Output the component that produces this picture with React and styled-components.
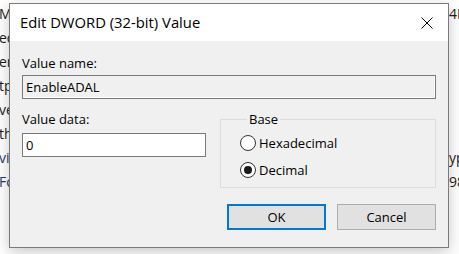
import React from "react";
import styled, { createGlobalStyle } from "styled-components";

const Global = createGlobalStyle`
  html, body { margin: 0; padding: 0; background: #ffffff; }
  body { font-family: "Open Sans", "Noto Sans", sans-serif; }
  * { box-sizing: border-box; }
`;

const Desktop = styled.div`
  position: relative;
  width: 459px;
  height: 254px;
  overflow: hidden;
  background: #ffffff;
`;

const Backdrop = styled.div`
  display: flex;
  justify-content: space-between;
  height: 100%;
  padding-top: 2px;
`;

const BackColumn = styled.div`
  width: ${(p) => p.$width}px;
  overflow: hidden;
  white-space: nowrap;
  font-family: "Open Sans", sans-serif;
  font-size: 14px;
  line-height: 24px;
  color: #1b1b1b;
  margin-left: ${(p) => p.$shift || 0}px;
`;

const BackLine = styled.div`
  height: 24px;
  color: ${(p) => (p.$blue ? "#1f3a66" : "#1b1b1b")};
`;

const Window = styled.div`
  position: absolute;
  left: 9px;
  top: 3px;
  width: 440px;
  height: 245px;
  display: flex;
  flex-direction: column;
  border: 1px solid #7a7a7a;
  background: #f0f0f0;
  box-shadow: 0 4px 14px rgba(0, 0, 0, 0.22);
`;

const TitleBar = styled.div`
  height: 37px;
  flex: none;
  display: flex;
  align-items: center;
  justify-content: space-between;
  padding: 0 15px 0 10px;
  background: #ffffff;
`;

const Title = styled.span`
  font-size: 14.8px;
  color: #000000;
  line-height: 37px;
`;

const CloseButton = styled.span`
  display: flex;
  width: 12px;
  height: 12px;
  margin-top: 1px;
`;

const Body = styled.div`
  flex: 1;
  display: flex;
  flex-direction: column;
  padding: 14px 12px 0 12px;
  font-size: 13px;
  color: #000000;
`;

const Label = styled.div`
  height: 16px;
  line-height: 16px;
  font-size: 13px;
`;

const TextBox = styled.div`
  width: ${(p) => p.$width}px;
  height: 24px;
  margin-top: ${(p) => p.$gap}px;
  border: 1px solid #7a7a7a;
  background: ${(p) => (p.$disabled ? "#f0f0f0" : "#ffffff")};
  box-shadow: ${(p) => (p.$disabled ? "inset -1px -1px 0 #ffffff" : "none")};
  padding-left: 3px;
  display: flex;
  align-items: center;
  font-size: 13px;
  color: #000000;
  line-height: 16px;
`;

const DataRow = styled.div`
  display: flex;
  justify-content: space-between;
  margin-top: 12px;
`;

const DataColumn = styled.div`
  display: flex;
  flex-direction: column;
`;

const GroupBox = styled.fieldset`
  width: 216px;
  height: 77px;
  margin: 0;
  padding: 6px 0 0 19px;
  border: 1px solid #dcdcdc;
  display: flex;
  flex-direction: column;
  gap: 7px;
`;

const Legend = styled.legend`
  padding: 0 2px;
  margin-left: 7px;
  height: 16px;
  line-height: 16px;
  font-size: 13px;
`;

const RadioRow = styled.label`
  display: flex;
  align-items: center;
  height: 20px;
  gap: 3px;
  font-size: 13px;
  line-height: 16px;
`;

const RadioCircle = styled.span`
  width: 16px;
  height: 16px;
  border-radius: 50%;
  border: 1px solid #333333;
  background: #ffffff;
  display: flex;
  align-items: center;
  justify-content: center;
  &::after {
    content: "";
    width: 8px;
    height: 8px;
    border-radius: 50%;
    background: ${(p) => (p.$checked ? "#1a1a1a" : "transparent")};
  }
`;

const ButtonRow = styled.div`
  display: flex;
  justify-content: flex-end;
  gap: 11px;
  margin-top: 16px;
`;

const Button = styled.div`
  width: 99px;
  height: 26px;
  display: flex;
  align-items: center;
  justify-content: center;
  background: #e1e1e1;
  border: ${(p) => (p.$default ? "2px solid #0078d7" : "1px solid #adadad")};
  font-size: 13px;
  color: #000000;
`;

export default function App() {
  return (
    <>
      <Global />
      <Desktop>
        <Backdrop>
          <BackColumn $width={12} $shift={-1}>
            <BackLine>M</BackLine>
            <BackLine>eq</BackLine>
            <BackLine>er</BackLine>
            <BackLine>tp</BackLine>
            <BackLine>ve</BackLine>
            <BackLine>th</BackLine>
            <BackLine $blue>vi</BackLine>
            <BackLine $blue>Fo</BackLine>
          </BackColumn>
          <BackColumn $width={10}>
            <BackLine>4E</BackLine>
            <BackLine />
            <BackLine />
            <BackLine />
            <BackLine />
            <BackLine />
            <BackLine>yp</BackLine>
            <BackLine>98</BackLine>
          </BackColumn>
        </Backdrop>
        <Window>
          <TitleBar>
            <Title>Edit DWORD (32-bit) Value</Title>
            <CloseButton>
              <svg width="12" height="12" viewBox="0 0 12 12">
                <path d="M0.5 0.5 L11.5 11.5 M11.5 0.5 L0.5 11.5" stroke="#000" strokeWidth="1" fill="none" />
              </svg>
            </CloseButton>
          </TitleBar>
          <Body>
            <Label>Value name:</Label>
            <TextBox $width={414} $gap={4} $disabled>EnableADAL</TextBox>
            <DataRow>
              <DataColumn>
                <Label>Value data:</Label>
                <TextBox $width={184} $gap={6}>0</TextBox>
              </DataColumn>
              <GroupBox>
                <Legend>Base</Legend>
                <RadioRow>
                  <RadioCircle />
                  Hexadecimal
                </RadioRow>
                <RadioRow>
                  <RadioCircle $checked />
                  Decimal
                </RadioRow>
              </GroupBox>
            </DataRow>
            <ButtonRow>
              <Button $default>OK</Button>
              <Button>Cancel</Button>
            </ButtonRow>
          </Body>
        </Window>
      </Desktop>
    </>
  );
}
